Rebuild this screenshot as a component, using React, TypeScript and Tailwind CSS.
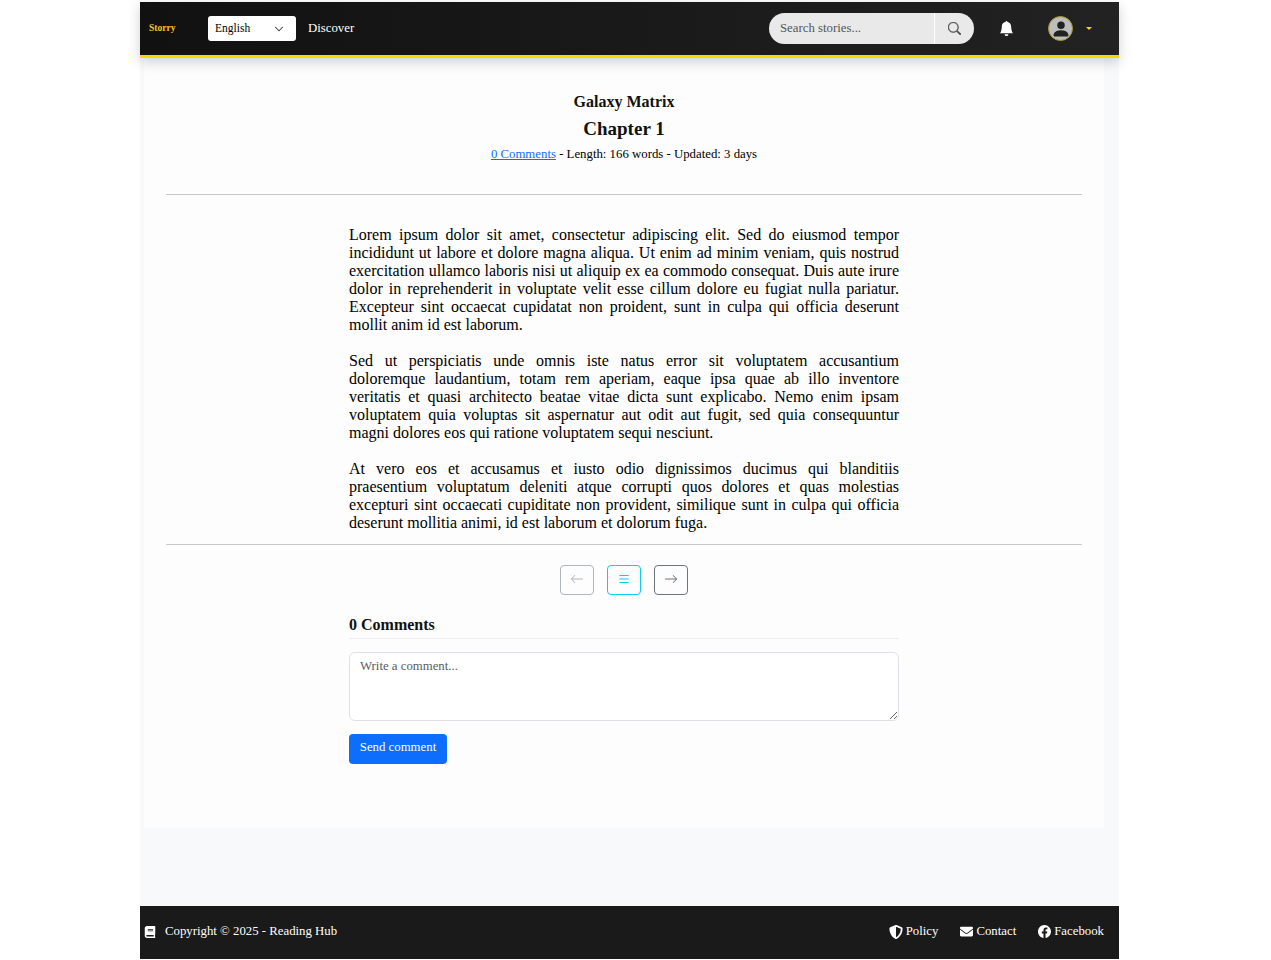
import React from "react";
import { ChevronDown } from "lucide-react";
import { BsBellFill, BsPersonFill, BsSearch, BsArrowLeft, BsArrowRight, BsList, BsFacebook } from "react-icons/bs";
import { FaBook, FaShieldAlt, FaEnvelope } from "react-icons/fa";

const P1 = "Lorem ipsum dolor sit amet, consectetur adipiscing elit. Sed do eiusmod tempor incididunt ut labore et dolore magna aliqua. Ut enim ad minim veniam, quis nostrud exercitation ullamco laboris nisi ut aliquip ex ea commodo consequat. Duis aute irure dolor in reprehenderit in voluptate velit esse cillum dolore eu fugiat nulla pariatur. Excepteur sint occaecat cupidatat non proident, sunt in culpa qui officia deserunt mollit anim id est laborum.";
const P2 = "Sed ut perspiciatis unde omnis iste natus error sit voluptatem accusantium doloremque laudantium, totam rem aperiam, eaque ipsa quae ab illo inventore veritatis et quasi architecto beatae vitae dicta sunt explicabo. Nemo enim ipsam voluptatem quia voluptas sit aspernatur aut odit aut fugit, sed quia consequuntur magni dolores eos qui ratione voluptatem sequi nesciunt.";
const P3 = "At vero eos et accusamus et iusto odio dignissimos ducimus qui blanditiis praesentium voluptatum deleniti atque corrupti quos dolores et quas molestias excepturi sint occaecati cupiditate non provident, similique sunt in culpa qui officia deserunt mollitia animi, id est laborum et dolorum fuga.";

export default function App() {
  return (
    <div className="bg-white min-h-[960px] pt-[2px] font-['Liberation_Serif',serif] text-[#111111]">
      <div className="ml-[140px] w-[979px] h-[957px] flex flex-col bg-[#f8f9fa]">
        <header className="h-[53px] shrink-0 box-content border-b-[3px] border-[#ffd700] bg-gradient-to-r from-[#111111] to-[#222222] flex items-center shadow-[0_4px_12px_rgba(0,0,0,0.18)] relative z-10 -mb-[3px]">
          <span className="ml-[9px] w-[24px] text-[9.5px] font-bold text-[#f5c518] leading-none">Storry</span>
          <div className="ml-[35px] w-[88px] h-[25px] bg-white rounded-[3px] flex items-center justify-between pl-[7px] pr-[10px] text-[11.5px] text-black">
            <span>English</span>
            <ChevronDown size={14} strokeWidth={1.8} className="text-[#343a40]" />
          </div>
          <span className="ml-[12px] text-[12.8px] text-white">Discover</span>
          <div className="ml-auto flex items-center">
            <div className="w-[205px] h-[31px] flex rounded-full overflow-hidden bg-[#e9e9e9]">
              <div className="w-[166px] pl-[11px] flex items-center text-[12.8px] text-[#555] border-r border-white">Search stories...</div>
              <div className="flex-1 flex items-center justify-center"><BsSearch size={13} className="text-[#555] stroke-[0.5px]" /></div>
            </div>
            <BsBellFill size={15} className="ml-[25px] text-white" />
            <div className="ml-[34px] w-[25px] h-[25px] rounded-full bg-[#bdbdbd] border-[1.5px] border-[#a8922a] flex items-center justify-center overflow-hidden">
              <BsPersonFill size={20} className="text-[#222] shrink-0" />
            </div>
            <div className="ml-[13px] mr-[27px] w-0 h-0 border-x-[3px] border-x-transparent border-t-[3px] border-t-[#ffd700]" />
          </div>
        </header>

        <main className="ml-[4px] mr-[15px] h-[773px] shrink-0 bg-[#fdfdfd] flex flex-col items-center pt-[36px]">
          <h2 className="text-[16px] leading-[18px] font-bold mt-[2px]">Galaxy Matrix</h2>
          <h1 className="text-[19px] leading-[22px] font-bold mt-[7px]">Chapter 1</h1>
          <p className="text-[12.8px] leading-[14px] mt-[7px] text-black">
            <span className="text-[#0d6efd] underline">0 Comments</span> - Length: 166 words - Updated: 3 days
          </p>
          <hr className="w-[916px] mt-[33px] border-t border-[#c8c8c8]" />
          <article className="w-[550px] mt-[31px] text-[16px] leading-[18px] text-black text-justify flex flex-col gap-[18px]">
            <p>{P1}</p>
            <p>{P2}</p>
            <p>{P3}</p>
          </article>
          <hr className="w-[916px] mt-[12px] border-t border-[#c8c8c8]" />
          <div className="flex gap-[13px] mt-[20px]">
            <div className="w-[34px] h-[30px] rounded-[4px] border border-[#adb5bd] flex items-center justify-center pb-[3px]"><BsArrowLeft size={14} className="text-[#adb5bd]" /></div>
            <div className="w-[34px] h-[30px] rounded-[4px] border border-[#0dcaf0] flex items-center justify-center pb-[3px]"><BsList size={14} className="text-[#0dcaf0]" /></div>
            <div className="w-[34px] h-[30px] rounded-[4px] border border-[#6c757d] flex items-center justify-center pb-[3px]"><BsArrowRight size={14} className="text-[#6c757d]" /></div>
          </div>
          <section className="w-[550px] mt-[21px]">
            <h3 className="text-[16px] leading-[18px] font-bold pb-[4px] border-b border-[#eeeeee]">0 Comments</h3>
            <textarea readOnly placeholder="Write a comment..." className="block mt-[13px] w-full h-[69px] rounded-[6px] border border-[#dee2e6] bg-white px-[10px] py-[6px] text-[12.8px] leading-[14px] placeholder:text-[#595c5f] outline-none" />
            <button className="mt-[13px] w-[98px] h-[30px] rounded-[4px] bg-[#0d6efd] text-white text-[12.8px] pb-[2px]">Send comment</button>
          </section>
        </main>

        <div className="flex-1" />

        <footer className="h-[53px] shrink-0 bg-[#1a1a1a] text-white flex items-center text-[12.8px] pl-[4px] pr-[15px] pb-[2px]">
          <FaBook size={12} />
          <span className="ml-[9px]">Copyright © 2025 - Reading Hub</span>
          <div className="ml-auto flex items-center gap-[22px]">
            <span className="flex items-center gap-[3px]"><FaShieldAlt size={14} />Policy</span>
            <span className="flex items-center gap-[3px]"><FaEnvelope size={13} />Contact</span>
            <span className="flex items-center gap-[3px]"><BsFacebook size={13} />Facebook</span>
          </div>
        </footer>
      </div>
    </div>
  );
}
